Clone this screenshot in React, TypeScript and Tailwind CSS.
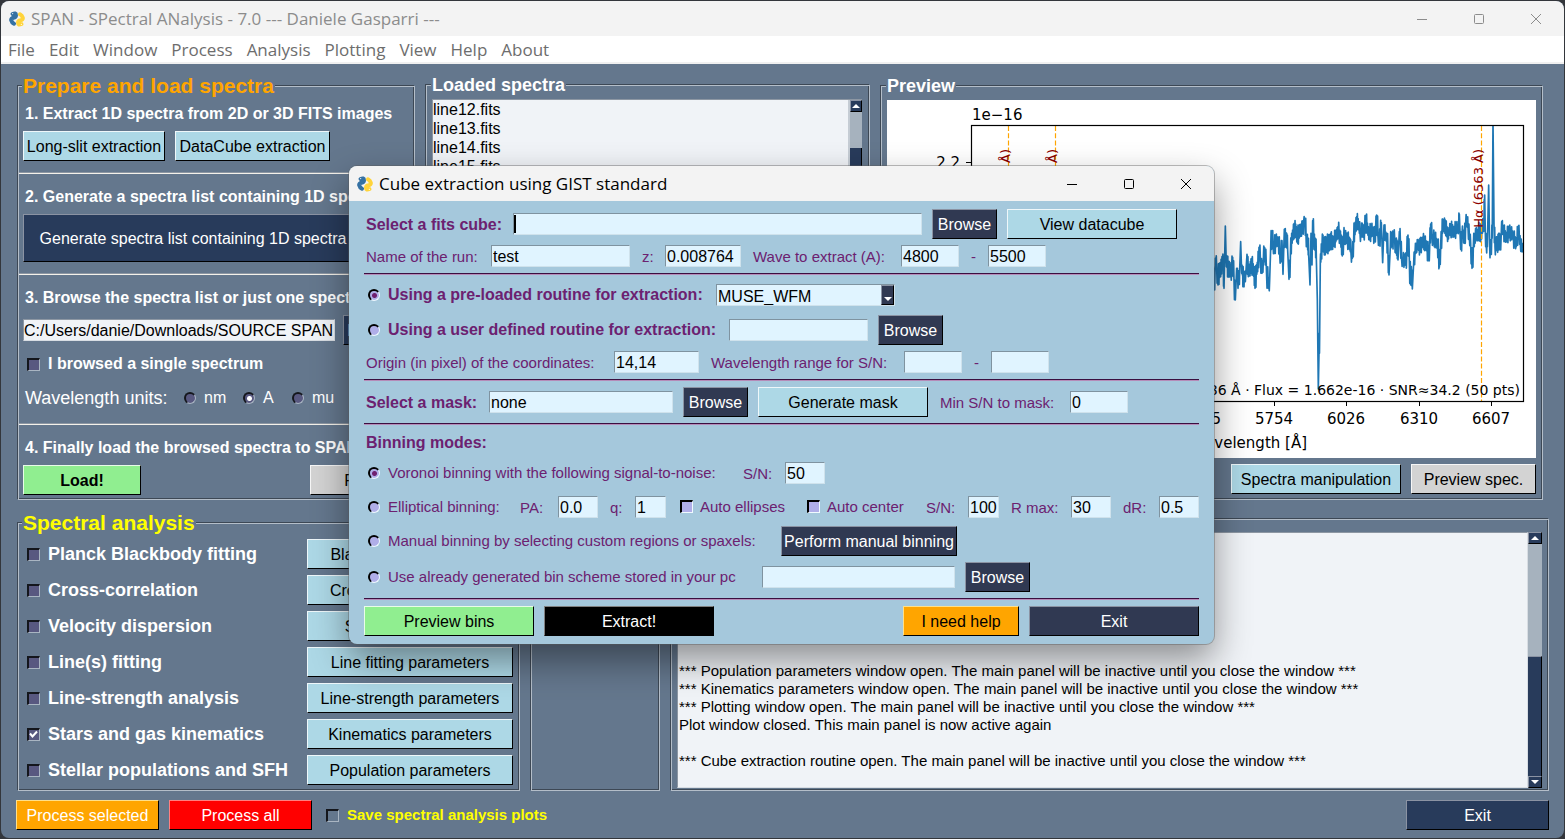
import type { ButtonHTMLAttributes, InputHTMLAttributes, ReactNode } from "react";
import { clsx } from "clsx";

const RAISED = "border border-t-white/80 border-l-white/80 border-r-black border-b-black";
const RAISED_DARK = "border border-t-[#8b93a3] border-l-[#8b93a3] border-r-black border-b-black";

const TONES = {
  sky: clsx(RAISED, "bg-[#add8e6] text-black"),
  navy: clsx(RAISED_DARK, "bg-[#283b5b] text-white"),
  ink: clsx(RAISED_DARK, "bg-[#303952] text-white"),
  green: clsx(RAISED, "bg-[#90ee90] text-black"),
  grey: clsx(RAISED, "bg-[#d3d3d3] text-black"),
  red: "border border-t-[#ff8080] border-l-[#ff8080] border-r-black border-b-black bg-[#ff0000] text-white",
  orange: "border border-t-[#ffe08a] border-l-[#ffe08a] border-r-black border-b-black bg-[#ffa500]",
  black: "border border-t-[#808080] border-l-[#808080] border-r-black border-b-black bg-black text-white",
};

type Tone = keyof typeof TONES;

function Button({ tone, className, ...rest }: { tone: Tone } & ButtonHTMLAttributes<HTMLButtonElement>) {
  return (
    <button
      type="button"
      className={clsx("flex h-[30px] shrink-0 items-center justify-center pt-0.5 whitespace-nowrap", TONES[tone], className)}
      {...rest}
    />
  );
}

function Logo() {
  return (
    <svg viewBox="0 0 16 16" className="size-4 shrink-0" fill="none" strokeLinecap="round" strokeWidth="4" aria-hidden="true">
      <path d="M3.6 3 Q7 1.4 7 4.2 Q7 6.4 4.6 6.7 Q1.8 7.2 2.2 9.2 Q2.8 11.6 5 12.7" stroke="#3571a3" />
      <path d="M12.4 13 Q9 14.6 9 11.8 Q9 9.600 11.4 9.3 Q14.2 8.8 13.8 6.8 Q13.2 4.400 11 3.3" stroke="#ffd43b" />
      <circle cx="3.6" cy="2.6" r="0.7" fill="#dfeaf2" />
      <circle cx="12.4" cy="13.4" r="0.7" fill="#fff6cc" />
    </svg>
  );
}

function TitleBar({ title, className, icons }: { title: string; className: string; icons: string }) {
  return (
    <header className={clsx("flex h-[35px] items-center bg-[#f3f3f3] pl-2 font-['Open_Sans',sans-serif]", className)}>
      <Logo />
      <h1 className="ml-1.5 flex-1 whitespace-nowrap">{title}</h1>
      <div className={clsx("flex", icons)}>
        <button type="button" aria-label="Minimize" className="flex h-[35px] w-[57px] items-center justify-center">
          <svg viewBox="0 0 12 12" className="size-3" fill="none" stroke="currentColor">
            <path d="M1 6.5H11" />
          </svg>
        </button>
        <button type="button" aria-label="Maximize" className="flex h-[35px] w-[57px] items-center justify-center">
          <svg viewBox="0 0 12 12" className="size-3" fill="none" stroke="currentColor">
            <rect x="1.5" y="1.5" width="9" height="9" rx="1" />
          </svg>
        </button>
        <button type="button" aria-label="Close" className="flex h-[35px] w-[57px] items-center justify-center">
          <svg viewBox="0 0 12 12" className="size-3" fill="none" stroke="currentColor">
            <path d="M1 1L11 11M11 1L1 11" />
          </svg>
        </button>
      </div>
    </header>
  );
}

function Frame({ title, legend, className, children }: { title?: string; legend?: string; className?: string; children?: ReactNode }) {
  return (
    <fieldset
      className={clsx(
        "min-w-0 border border-[#b4bec9] shadow-[-1px_-1px_0_#3d4855,inset_-1px_-1px_0_#3d4855]",
        className,
      )}
    >
      {title && <legend className={clsx("-ml-px bg-[#64778d] px-px font-bold whitespace-nowrap", legend)}>{title}</legend>}
      {children}
    </fieldset>
  );
}

function Rule() {
  return <hr className="-mx-1 mt-[11px] mb-2 h-0.5 border-t border-b border-t-[#8d97a3] border-b-[#f4f1ea]" />;
}

function StepTitle({ children }: { children: ReactNode }) {
  return <h2 className="mb-1 flex h-7 items-center overflow-hidden pt-0.5 pl-0.5 font-bold whitespace-nowrap">{children}</h2>;
}

function Tick({ light, hollow, ...rest }: { light?: boolean; hollow?: boolean } & InputHTMLAttributes<HTMLInputElement>) {
  return (
    <span className="grid size-[13px] shrink-0">
      <input
        type="checkbox"
        className={clsx(
          "peer size-[13px] appearance-none border-t-2 border-r border-b border-l-2 [grid-area:1/1]",
          light
            ? "border-t-black border-r-[#f0faff] border-b-[#f0faff] border-l-black bg-[#b0aee8]"
            : "border-t-[#14161c] border-r-[#a9b5c2] border-b-[#a9b5c2] border-l-[#14161c]",
          !light && (hollow ? "bg-[#64778d]" : "bg-[#585880]"),
        )}
        {...rest}
      />
      <svg viewBox="0 0 13 13" className="pointer-events-none hidden size-[13px] [grid-area:1/1] peer-checked:block" fill="none" stroke="white" strokeWidth="2">
        <path d="M3 5.5L5.5 8.5L10 3.5" />
      </svg>
    </span>
  );
}

function Dot({ light, ...rest }: { light?: boolean } & InputHTMLAttributes<HTMLInputElement>) {
  return (
    <input
      type="radio"
      className={clsx(
        "size-3 shrink-0 appearance-none rounded-full border-t-2 border-r border-b border-l-2",
        light
          ? "border-t-black border-r-[#eefaff] border-b-[#eefaff] border-l-black bg-[#b0aee8] checked:bg-[radial-gradient(circle,#6f1f6f_2px,transparent_3px)]"
          : "border-t-[#14161c] border-r-[#a9b5c2] border-b-[#a9b5c2] border-l-[#14161c] bg-[#585880] checked:bg-[radial-gradient(circle,#ffffff_2px,transparent_3px)]",
      )}
      {...rest}
    />
  );
}

function ScrollArrow({ down }: { down?: boolean }) {
  return (
    <button
      type="button"
      aria-label={down ? "Scroll down" : "Scroll up"}
      className="flex h-3 w-full items-center justify-center border border-t-[#8b93a3] border-r-black border-b-black border-l-[#8b93a3] bg-[#283b5b]"
    >
      <svg viewBox="0 0 8 4" className="h-1 w-2" fill="white">
        <path d={down ? "M0 0H8L4 4Z" : "M0 4H8L4 0Z"} />
      </svg>
    </button>
  );
}

const MENU = ["File", "Edit", "Window", "Process", "Analysis", "Plotting", "View", "Help", "About"];

const FILES = ["line12.fits", "line13.fits", "line14.fits", "line15.fits"];

const TASKS = [
  { name: "Planck Blackbody fitting", params: "Blackbody parameters" },
  { name: "Cross-correlation", params: "Cross-corr parameters" },
  { name: "Velocity dispersion", params: "Sigma parameters" },
  { name: "Line(s) fitting", params: "Line fitting parameters" },
  { name: "Line-strength analysis", params: "Line-strength parameters" },
  { name: "Stars and gas kinematics", params: "Kinematics parameters", on: true },
  { name: "Stellar populations and SFH", params: "Population parameters" },
];

const LOG = [
  "", "", "", "", "", "", "",
  "*** Population parameters window open. The main panel will be inactive until you close the window ***",
  "*** Kinematics parameters window open. The main panel will be inactive until you close the window ***",
  "*** Plotting window open. The main panel will be inactive until you close the window ***",
  "Plot window closed. This main panel is now active again",
  "",
  "*** Cube extraction routine open. The main panel will be inactive until you close the window ***",
].join("\n");

const FLUX =
  "30,520 36,540 40,500 44,570 46,475 50,500 54,555 58,490 62,530 66,470 70,500 72,565 76,378 79,500 82,470 84,530 88,485 91,530 95,505 98,472 102,540 106,600 110,505 113,535 116,555 119,510 122,425 125,520 128,500 130,560 133,515 136,545 141,463 145,530 149,492 152,520 155,475 158,520 162,500 165,565 169,495 173,515 177,442 181,475 186,520 190,480 194,443 199,500 205,565 209,540 212,445 216,395 219,430 223,460 227,405 230,438 235,412 239,460 243,485 246,422 249,523 253,388 257,440 260,400 263,450 267,538 271,475 275,400 279,420 283,370 286,405 289,380 293,430 296,378 300,410 303,372 307,400 311,365 315,356 318,405 321,438 324,415 326,465 330,555 333,400 336,495 338,362 341,400 344,450 346,415 349,475 352,600 354,780 355,867 357,760 359,700 361,480 363,468 366,440 369,405 373,465 377,410 381,458 385,405 388,452 392,400 395,445 399,410 403,438 406,395 410,420 414,380 417,390 420,430 424,405 427,468 431,415 434,395 438,430 442,400 446,445 450,415 453,460 457,475 461,420 464,375 467,395 470,350 473,380 477,365 480,400 484,410 487,370 490,412 494,385 497,347 501,395 505,380 509,420 513,375 517,405 520,385 524,425 527,385 530,345 534,410 538,430 541,395 544,368 548,488 552,375 556,420 560,400 564,460 567,525 571,440 574,398 577,440 580,400 584,415 588,460 591,420 594,480 598,395 601,420 605,480 609,495 613,465 617,492 620,470 624,405 628,480 632,555 634,500 637,567 641,490 645,460 649,430 653,445 657,425 661,455 665,415 669,440 673,410 677,450 681,425 685,482 689,440 692,372 696,410 700,430 704,400 708,440 712,420 716,470 718,502 722,440 726,400 728,357 732,395 736,360 740,410 744,395 748,405 752,372 756,405 760,380 764,410 768,370 772,395 776,385 778,342 782,448 786,400 790,390 793,430 797,370 801,352 804,380 808,410 812,430 816,505 820,440 824,400 828,415 832,390 835,420 839,370 842,425 846,365 850,390 852,360 854,285 856,400 859,440 862,440 866,255 869,440 872,462 875,420 877,370 879,60 882,370 885,440 888,452 892,410 895,450 898,400 902,450 905,365 908,400 911,380 914,420 918,398 921,425 925,382 928,410 932,388 936,412 940,400 944,438 948,418 951,435 954,380 958,410 961,430 965,442 969,445";

// Adds the pixel-scale noise of the trace between the sampled points.
function withNoise(series: string) {
  const points = series.split(" ").map((pair) => pair.split(",").map(Number));
  return points
    .flatMap(([x, y], i) => {
      const next = points[i + 1];
      if (!next || Math.abs(next[1] - y) > 75) return [`${x},${y}`];
      const dx = next[0] - x;
      const dy = next[1] - y;
      const kick = 9 + ((i * 7) % 11);
      const way = dy < 0 ? -1 : 1;
      return [`${x},${y}`, `${x + dx * 0.35},${y + dy * 0.7 + way * kick}`, `${x + dx * 0.7},${y + dy * 0.3 - way * kick}`];
    })
    .join(" ");
}

function Spectrum() {
  const ticks = [
    [1202, "5495"],
    [1274, "5754"],
    [1346, "6026"],
    [1419, "6310"],
    [1491, "6607"],
  ] as const;
  const lines = [
    [1008, "Hβ (4861 Å)"],
    [1055, "[OIII] (5007 Å)"],
    [1481, "Hα (6563 Å)"],
  ] as const;
  return (
    <svg viewBox="887 100 649 358" className="w-full bg-white font-['DejaVu_Sans',sans-serif]" role="img" aria-label="Spectrum preview">
      <defs>
        <clipPath id="axes">
          <rect x="971" y="125" width="553" height="277" />
        </clipPath>
      </defs>
      <g clipPath="url(#axes)">
        <polyline
          points={withNoise(FLUX)}
          transform="translate(1200 100) scale(0.33333)"
          fill="none"
          stroke="#1f77b4"
          strokeWidth="5"
          strokeLinejoin="round"
        />
      </g>
      {lines.map(([x]) => (
        <path key={x} d={`M${x + 0.5} 126V401`} stroke="#ffa500" strokeWidth="1.2" strokeDasharray="5 2.2" />
      ))}
      {lines.map(([x, name]) => (
        <text key={name} transform={`translate(${x + 2} 149) rotate(-90)`} textAnchor="end" fontSize="13" fill="#8b0000">
          {name}
        </text>
      ))}
      <rect x="971.5" y="125.5" width="552" height="276" fill="none" stroke="black" strokeWidth="1.2" />
      <path d="M966 162.500H971" stroke="black" />
      <g fontSize="15" fill="black">
        <text x="972" y="120">1e−16</text>
        <text x="960" y="168" textAnchor="end">2.2</text>
        {ticks.map(([x, label]) => (
          <text key={label} x={x} y="424" textAnchor="middle">{label}</text>
        ))}
        <text x="1307" y="448" textAnchor="end">Wavelength [Å]</text>
      </g>
      {ticks.map(([x]) => (
        <path key={x} d={`M${x + 0.5} 402V406`} stroke="black" />
      ))}
      <text x="1520" y="395" textAnchor="end" fontSize="14" fill="black">
        λ = 6586 Å · Flux = 1.662e-16 · SNR≈34.2 (50 pts)
      </text>
    </svg>
  );
}

/* Cube extraction window */

function Field({ className, ...rest }: InputHTMLAttributes<HTMLInputElement>) {
  return (
    <input
      type="text"
      className={clsx(
        "h-[22px] shrink-0 border border-t-[#7f93a0] border-r-[#cfe2ec] border-b-[#cfe2ec] border-l-[#7f93a0] bg-[#e0f4ff] px-px pt-0.5 text-base text-black outline-none",
        className,
      )}
      {...rest}
    />
  );
}

function Caption({ htmlFor, className, children }: { htmlFor?: string; className: string; children: ReactNode }) {
  return (
    <label htmlFor={htmlFor} className={clsx("shrink-0 pt-0.5 pl-0.5 whitespace-nowrap", className)}>
      {children}
    </label>
  );
}

function Choice({ group, on, className, children }: { group: string; on?: boolean; className: string; children: ReactNode }) {
  return (
    <label className={clsx("flex shrink-0 items-center gap-2 pl-1 whitespace-nowrap", className)}>
      <Dot light name={group} defaultChecked={on} />
      {children}
    </label>
  );
}

function Line({ className, children }: { className: string; children: ReactNode }) {
  return <div className={clsx("flex items-center gap-2.5", className)}>{children}</div>;
}

function DialogRule() {
  return <hr className="h-0.5 border-t border-b border-t-[#3a0f3f] border-b-[#b58bb8]" />;
}

function CubeDialog() {
  return (
    <section
      role="dialog"
      aria-label="Cube extraction using GIST standard"
      className="absolute top-[166px] left-[349px] w-[865px] overflow-hidden rounded-lg bg-[#a5c8dc] text-[#6c2170] shadow-[0_0_0_1px_rgba(90,90,90,0.4),0_16px_36px_rgba(0,0,0,0.42)]"
    >
      <TitleBar title="Cube extraction using GIST standard" className="text-[17px] text-black" icons="text-black" />
      <form className="flex flex-col gap-1.5 px-[15px] py-2 text-[15px]">
        <Line className="h-[30px]">
          <Caption htmlFor="cube" className="w-[139px] text-base font-bold">Select a fits cube:</Caption>
          <div className="relative flex">
            <Field id="cube" className="w-[409px]" />
            <span className="absolute top-0.5 left-px h-[18px] w-0.5 bg-black" />
          </div>
          <Button tone="ink" className="w-[65px] text-base">Browse</Button>
          <Button tone="sky" className="w-[170px] text-base">View datacube</Button>
        </Line>
        <Line className="h-[22px]">
          <Caption htmlFor="run" className="w-[117px]">Name of the run:</Caption>
          <Field id="run" defaultValue="test" className="w-[139px]" />
          <Caption htmlFor="z" className="w-[15px]">z:</Caption>
          <Field id="z" defaultValue="0.008764" className="w-[76px]" />
          <Caption htmlFor="wave-min" className="w-[140px]">Wave to extract (A):</Caption>
          <Field id="wave-min" defaultValue="4800" className="w-[58px]" />
          <Caption htmlFor="wave-max" className="w-[9px]">-</Caption>
          <Field id="wave-max" defaultValue="5500" className="w-[58px]" />
        </Line>
        <DialogRule />
        <Line className="h-7">
          <Choice group="routine" on className="w-[342px] text-base font-bold">Using a pre-loaded routine for extraction:</Choice>
          <div className="flex h-[22px] w-[179px] border border-t-[#7f93a0] border-r-[#cfe2ec] border-b-[#cfe2ec] border-l-[#7f93a0] bg-[#e0f4ff]">
            <select aria-label="Pre-loaded routine" className="min-w-0 flex-1 appearance-none bg-transparent pt-0.5 pl-px text-base leading-5 text-black outline-none">
              <option>MUSE_WFM</option>
            </select>
            <span className="flex w-[13px] items-end justify-center border border-t-[#8b93a3] border-r-black border-b-black border-l-[#8b93a3] bg-[#303952] pb-[3px]">
              <svg viewBox="0 0 8 4" className="h-1 w-2" fill="white" aria-hidden="true">
                <path d="M0 0H8L4 4Z" />
              </svg>
            </span>
          </div>
        </Line>
        <Line className="h-[30px]">
          <Choice group="routine" className="w-[355px] text-base font-bold">Using a user defined routine for extraction:</Choice>
          <Field aria-label="User defined routine" className="w-[139px]" />
          <Button tone="ink" className="w-[65px] text-base">Browse</Button>
        </Line>
        <Line className="h-[22px]">
          <Caption htmlFor="origin" className="w-[240px]">Origin (in pixel) of the coordinates:</Caption>
          <Field id="origin" defaultValue="14,14" className="w-[85px]" />
          <Caption htmlFor="sn-min" className="w-[185px]">Wavelength range for S/N:</Caption>
          <Field id="sn-min" className="w-[58px]" />
          <Caption htmlFor="sn-max" className="w-[9px]">-</Caption>
          <Field id="sn-max" className="w-[58px]" />
        </Line>
        <DialogRule />
        <Line className="h-[30px]">
          <Caption htmlFor="mask" className="w-[115px] text-base font-bold">Select a mask:</Caption>
          <Field id="mask" defaultValue="none" className="w-[184px]" />
          <Button tone="ink" className="w-[65px] text-base">Browse</Button>
          <Button tone="sky" className="w-[170px] text-base">Generate mask</Button>
          <Caption htmlFor="mask-sn" className="w-[122px]">Min S/N to mask:</Caption>
          <Field id="mask-sn" defaultValue="0" className="w-[58px]" />
        </Line>
        <DialogRule />
        <h2 className="flex h-[22px] items-center pt-0.5 pl-0.5 text-base font-bold">Binning modes:</h2>
        <Line className="h-7">
          <Choice group="binning" on className="w-[367px]">Voronoi binning with the following signal-to-noise:</Choice>
          <Caption htmlFor="voronoi-sn" className="w-[34px]">S/N:</Caption>
          <Field id="voronoi-sn" defaultValue="50" className="w-10" />
        </Line>
        <Line className="h-[27px]">
          <Choice group="binning" className="w-[144px]">Elliptical binning:</Choice>
          <Caption htmlFor="pa" className="w-[30px]">PA:</Caption>
          <Field id="pa" defaultValue="0.0" className="w-10" />
          <Caption htmlFor="q" className="w-[17px]">q:</Caption>
          <Field id="q" defaultValue="1" className="w-[31px]" />
          <label className="flex w-[117px] items-center gap-[7px] pl-1 whitespace-nowrap">
            <Tick light />
            Auto ellipses
          </label>
          <label className="flex w-[111px] items-center gap-[7px] pl-1 whitespace-nowrap">
            <Tick light />
            Auto center
          </label>
          <Caption htmlFor="ellipse-sn" className="w-[34px]">S/N:</Caption>
          <Field id="ellipse-sn" defaultValue="100" className="w-[31px]" />
          <Caption htmlFor="rmax" className="w-[52px]">R max:</Caption>
          <Field id="rmax" defaultValue="30" className="w-10" />
          <Caption htmlFor="dr" className="w-7">dR:</Caption>
          <Field id="dr" defaultValue="0.5" className="w-10" />
        </Line>
        <Line className="h-[30px]">
          <Choice group="binning" className="w-[407px]">Manual binning by selecting custom regions or spaxels:</Choice>
          <Button tone="ink" className="w-[176px] text-base">Perform manual binning</Button>
        </Line>
        <Line className="h-[30px]">
          <Choice group="binning" className="w-[388px]">Use already generated bin scheme stored in your pc</Choice>
          <Field aria-label="Bin scheme" className="w-[193px]" />
          <Button tone="ink" className="w-[65px] text-base">Browse</Button>
        </Line>
        <DialogRule />
        <Line className="h-[30px] text-base">
          <Button tone="green" className="w-[170px]">Preview bins</Button>
          <Button tone="black" className="mr-auto w-[170px]">Extract!</Button>
          <Button tone="orange" className="w-[116px] text-black">I need help</Button>
          <Button tone="ink" className="w-[170px]">Exit</Button>
        </Line>
      </form>
    </section>
  );
}

function PreparePanel() {
  return (
    <Frame title="Prepare and load spectra" legend="text-[21px] leading-[26px] text-[#ffa500]" className="w-[397px] shrink-0 px-1 pb-1">
      <StepTitle>1. Extract 1D spectra from 2D or 3D FITS images</StepTitle>
      <div className="flex gap-2.5">
        <Button tone="sky" className="w-[142px]">Long-slit extraction</Button>
        <Button tone="sky" className="w-[155px]">DataCube extraction</Button>
      </div>
      <Rule />
      <StepTitle>2. Generate a spectra list containing 1D spectra</StepTitle>
      <button type="button" className={clsx("flex h-12 w-[340px] items-center justify-center pt-0.5 whitespace-nowrap", TONES.navy)}>
        Generate spectra list containing 1D spectra
      </button>
      <Rule />
      <StepTitle>3. Browse the spectra list or just one spectrum</StepTitle>
      <div className="flex items-center gap-2">
        <input
          type="text"
          aria-label="Spectra list"
          defaultValue="C:/Users/danie/Downloads/SOURCE SPAN"
          className="h-[22px] w-[312px] border border-t-[#8d97a3] border-r-[#d8dde3] border-b-[#d8dde3] border-l-[#8d97a3] bg-[#f0f3f7] px-0 pt-0.5 text-black"
        />
        <Button tone="navy" className="w-[62px]">Browse</Button>
      </div>
      <label className="mt-1 flex h-[30px] items-center gap-2 pl-1 font-bold">
        <Tick />
        I browsed a single spectrum
      </label>
      <div role="radiogroup" aria-labelledby="units" className="mt-1 flex h-[29px] items-center pl-0.5">
        <span id="units" className="w-[159px] text-lg">Wavelength units:</span>
        <label className="flex w-[59px] items-center gap-2"><Dot name="units" />nm</label>
        <label className="flex w-[49px] items-center gap-2"><Dot name="units" defaultChecked />A</label>
        <label className="flex items-center gap-2"><Dot name="units" />mu</label>
      </div>
      <Rule />
      <StepTitle>4. Finally load the browsed spectra to SPAN</StepTitle>
      <div className="flex justify-between pr-1">
        <Button tone="green" className="w-[118px] font-bold">Load!</Button>
        <Button tone="grey" className="w-24">Plot</Button>
      </div>
    </Frame>
  );
}

function LoadedPanel() {
  return (
    <Frame title="Loaded spectra" legend="text-lg leading-[24px]" className="flex w-[444px] shrink-0 flex-col pt-0.5 pr-[7px] pb-2 pl-[5px]">
      <div className="flex h-full border-t border-l border-[#8d97a3]">
        <ul className="flex-1 overflow-hidden bg-[#f0f3f7] leading-[19px] text-black">
          {FILES.map((file) => (
            <li key={file}>{file}</li>
          ))}
        </ul>
        <div className="flex w-[14px] flex-col border-l-2 border-[#c5ccd4] bg-[#a6b2be]">
          <ScrollArrow />
          <div className="mt-9 flex-1 border-r border-black bg-[#283b5b]" />
        </div>
      </div>
    </Frame>
  );
}

function PreviewPanel() {
  return (
    <Frame title="Preview" legend="text-lg leading-[26px]" className="flex-1 pt-px pr-1.5 pb-1 pl-[5px]">
      <Spectrum />
      <div className="mt-1.5 flex justify-end gap-2.5">
        <Button tone="sky" className="w-[170px]">Spectra manipulation</Button>
        <Button tone="grey" className="w-[125px]">Preview spec.</Button>
      </div>
    </Frame>
  );
}

function AnalysisPanel() {
  return (
    <Frame title="Spectral analysis" legend="text-[21px] leading-[26px] text-[#ffff00]" className="w-[502px] shrink-0 pt-[3px] pr-1.5 pb-[5px] pl-1">
      <div className="flex flex-col gap-1.5">
        {TASKS.map((task) => (
          <div key={task.name} className="flex items-center justify-between">
            <label className="flex items-center gap-2 pl-1 text-lg leading-[30px] font-bold">
              <Tick defaultChecked={task.on} />
              {task.name}
            </label>
            <Button tone="sky" className="w-[206px]">{task.params}</Button>
          </div>
        ))}
      </div>
    </Frame>
  );
}

function OutputPanel() {
  return (
    <Frame title="Output" legend="text-base leading-[18px]" className="flex flex-1 flex-col pt-1 pr-1.5 pb-0.5 pl-[5px]">
      <div className="flex h-full">
        <textarea
          readOnly
          aria-label="Output"
          value={LOG}
          className="flex-1 resize-none overflow-hidden border border-t-[#8d97a3] border-r-[#d8dde3] border-b-[#d8dde3] border-l-[#8d97a3] bg-[#f0f3f7] px-px pt-[3px] text-[15px] leading-[18px] text-black"
        />
        <div className="flex w-[14px] flex-col bg-[#a6b2be]">
          <ScrollArrow />
          <div className="h-28" />
          <div className="flex-1 border-t border-r border-t-[#8b93a3] border-r-black bg-[#283b5b]" />
          <ScrollArrow down />
        </div>
      </div>
    </Frame>
  );
}

export default function App() {
  return (
    <div className="relative flex min-h-screen flex-col overflow-hidden bg-[#33363b] p-px font-['Liberation_Sans',Arial,sans-serif] text-base leading-5 text-white">
      <div className="flex flex-1 flex-col overflow-hidden rounded-lg bg-[#64778d]">
        <TitleBar title="SPAN - SPectral ANalysis - 7.0 --- Daniele Gasparri ---" className="text-[17px] text-[#8c8c8c]" icons="text-[#8c8c8c]" />
        <nav className="flex h-7 items-center gap-[14px] border-b-2 border-[#f0f0f0] bg-white pt-0.5 pl-[7px] font-['Open_Sans',sans-serif] text-[17px] text-[#6d6d6d]">
          {MENU.map((item) => (
            <button type="button" key={item}>{item}</button>
          ))}
        </nav>
        <main className="flex flex-1 flex-col pt-[9px] pr-[15px] pl-[17px]">
          <div className="flex gap-[11px] pr-1.5">
            <PreparePanel />
            <LoadedPanel />
            <PreviewPanel />
          </div>
          <div className="mt-2.5 flex gap-[11px]">
            <AnalysisPanel />
            <Frame className="mt-3 w-[129px] shrink-0" />
            <OutputPanel />
          </div>
        </main>
        <footer className="flex items-center gap-2.5 px-[15px] pt-[9px] pb-2">
          <Button tone="orange" className="w-[143px] text-white">Process selected</Button>
          <Button tone="red" className="w-[143px]">Process all</Button>
          <label className="mr-auto flex items-center gap-2 pl-1 text-[15px] font-bold text-[#ffff00]">
            <Tick hollow />
            Save spectral analysis plots
          </label>
          <Button tone="navy" className="w-[143px]">Exit</Button>
        </footer>
      </div>
      <CubeDialog />
    </div>
  );
}
